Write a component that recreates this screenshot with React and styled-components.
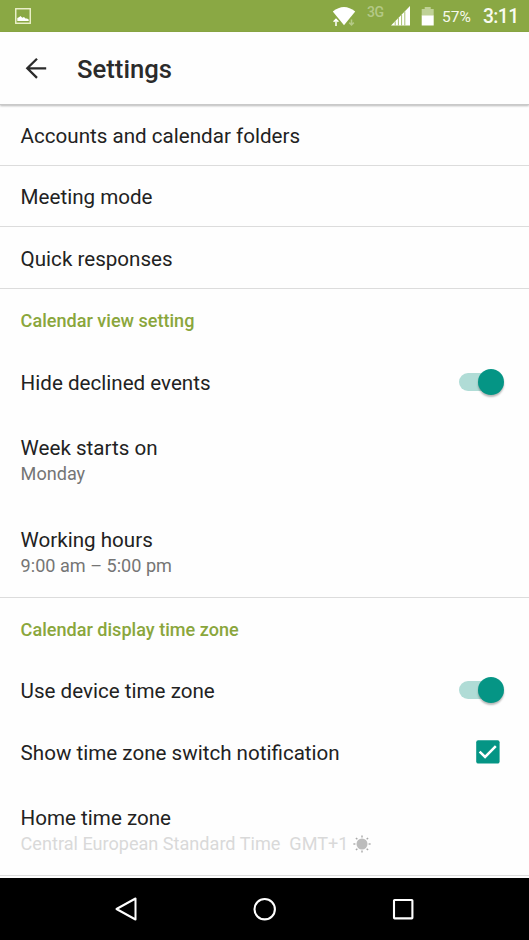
import React from "react";
import styled, { createGlobalStyle } from "styled-components";

const GlobalStyle = createGlobalStyle`
  *, *::before, *::after { box-sizing: border-box; }
  body { margin: 0; background: #fff; font-family: Roboto, "Noto Sans", sans-serif; }
  svg { display: block; flex: none; }
`;

const Screen = styled.div`
  display: flex;
  flex-direction: column;
  width: 529px;
  height: 940px;
  overflow: hidden;
  background: #fefefe;
  color: #222;
`;

const StatusBar = styled.div`
  display: flex;
  align-items: center;
  flex: none;
  height: 32px;
  padding: 0 11px 0 15px;
  background: #8aa844;
  color: #fff;
`;

const StatusIcons = styled.div`
  display: flex;
  align-items: center;
  margin-left: auto;
`;

const Network = styled.span`
  width: 17px;
  margin: 0 7px 9px 11px;
  font-size: 14px;
  font-weight: 500;
  line-height: 14px;
  letter-spacing: -0.4px;
  color: #b4c986;
`;

const Percent = styled.span`
  width: 41px;
  margin-left: 8px;
  padding-top: 2px;
  font-size: 15.5px;
  white-space: nowrap;
  color: #f6f9ec;
`;

const Clock = styled.span`
  width: 35px;
  padding-top: 1px;
  font-size: 19.3px;
  font-weight: 500;
  letter-spacing: -0.6px;
  white-space: nowrap;
  color: #f8fbf0;
`;

const AppBar = styled.header`
  display: flex;
  align-items: center;
  flex: none;
  height: 73px;
  padding: 0 25px;
  background: #fefefe;
  border-bottom: 1px solid #c9c9c9;
  box-shadow: 0 1px 2px rgba(0, 0, 0, 0.28);
`;

const Title = styled.h1`
  margin: 1px 0 0 29px;
  font-size: 25.7px;
  font-weight: 500;
  line-height: 32px;
  color: #2b2b2b;
`;

const List = styled.main`
  flex: 1;
  min-height: 0;
`;

const Row = styled.div`
  display: flex;
  align-items: center;
  justify-content: space-between;
  height: ${(p) => p.$height}px;
  padding: ${(p) => p.$top || 0}px ${(p) => p.$end || 21}px 0 20.6px;
  border-bottom: ${(p) => (p.$divided ? "1px solid #dcdcdc" : "none")};
`;

const SectionTitle = styled.h2`
  margin: 0;
  padding: 0 20.6px;
  font-size: 18.08px;
  font-weight: 500;
  line-height: ${(p) => p.$height}px;
  color: #8aa63c;
`;

const Label = styled.div`
  font-size: 20.6px;
  line-height: 26px;
  white-space: nowrap;
`;

const Detail = styled.div`
  display: flex;
  align-items: center;
  gap: 5px;
  font-size: 18.1px;
  line-height: 26px;
  white-space: pre;
  color: ${(p) => (p.$disabled ? "#d9d9d9" : "#757575")};
`;

const Track = styled.div`
  display: flex;
  justify-content: flex-end;
  align-items: center;
  width: 45px;
  height: 18px;
  margin-bottom: 2px;
  border-radius: 9px;
  background: linear-gradient(to right, #b0dcd6 38px, transparent 38px);
`;

const Thumb = styled.div`
  width: 26px;
  height: 26px;
  flex: none;
  border-radius: 50%;
  background: #059585;
  box-shadow: 0 2px 2px rgba(0, 0, 0, 0.28);
`;

const NavBar = styled.nav`
  display: flex;
  align-items: center;
  justify-content: space-between;
  flex: none;
  height: 62px;
  padding: 0 114px;
  background: #000;
`;

const Toggle = () => (
  <Track role="switch" aria-checked="true">
    <Thumb />
  </Track>
);

const PictureIcon = () => (
  <svg width="16" height="16" viewBox="0 0 16 16">
    <rect x="0.75" y="0.75" width="14.5" height="14.5" fill="none" stroke="#eef3cf" strokeWidth="1.4" />
    <path d="M2.3 13V10L4 9.2L5.5 8L7.3 9.8L9 9L10.5 10.5H12L13.7 11.5V13Z" fill="#fff" />
  </svg>
);

const WifiIcon = () => (
  <svg width="24" height="20" viewBox="0 0 24 20">
    <path d="M0.8 5.6Q12-3.6 23.2 5.6L12 19.2Z" fill="#fff" />
    <path d="M4 20V13.2M1.4 15.6L4 13L6.6 15.6" fill="none" stroke="#8aa844" strokeWidth="3" />
    <path d="M4 20V13.6M1.6 15.8L4 13.4L6.4 15.8" fill="none" stroke="#fff" strokeWidth="1.5" />
    <path d="M19.5 13.5V19M17.2 16.6L19.5 18.9L21.8 16.6" fill="none" stroke="#b4c986" strokeWidth="1.5" />
  </svg>
);

const SignalIcon = () => (
  <svg width="20" height="20" viewBox="0 0 20 20">
    <path d="M0 19.5L19 0V19.5Z" fill="#fff" />
    <path d="M4.2 19.5V15.3M7.4 19.5V12M10.6 19.5V8.7M13.8 19.5V5.4" stroke="#a8c06f" strokeWidth="1" />
  </svg>
);

const BatteryIcon = () => (
  <svg width="13" height="19" viewBox="0 0 13 19">
    <path d="M0.7 9V2H3.7V0H9.7V2H12.7V9Z" fill="#bfd196" />
    <path d="M0.7 8.5H12.7V18.5H0.7Z" fill="#fff" />
  </svg>
);

const BackArrow = () => (
  <svg width="23" height="22" viewBox="0 0 23 22" fill="none" stroke="#2b2b2b" strokeWidth="2.3">
    <path d="M12 1.7L2.3 11.3L12 20.9M2.3 11.3H21.2" />
  </svg>
);

const CheckedBox = () => (
  <svg width="24" height="26" viewBox="0 0 24 26">
    <rect x="0.2" y="0.2" width="23.4" height="23.4" rx="2" fill="#059585" />
    <path d="M3.6 11.6L9.1 17L19.8 6.2" fill="none" stroke="#fff" strokeWidth="2.5" />
  </svg>
);

const rays = [0, 45, 90, 135, 180, 225, 270, 315];

const SunIcon = () => (
  <svg width="18" height="18" viewBox="0 0 18 18">
    <circle cx="9" cy="9" r="5.5" fill="#bcbcbc" />
    {rays.map((angle) => (
      <path key={angle} d="M9 0.4V2.4" stroke="#a8a8a8" strokeWidth="1.4" transform={`rotate(${angle} 9 9)`} />
    ))}
  </svg>
);

const NavBack = () => (
  <svg width="24" height="26" viewBox="0 0 24 26">
    <path d="M2.5 13L21.5 2.5V23.5Z" fill="none" stroke="#fff" strokeWidth="2" strokeLinejoin="round" />
  </svg>
);

const NavHome = () => (
  <svg width="24" height="24" viewBox="0 0 24 24">
    <circle cx="11.7" cy="12.2" r="10.2" fill="none" stroke="#fff" strokeWidth="2.1" />
  </svg>
);

const NavRecent = () => (
  <svg width="24" height="24" viewBox="0 0 24 24">
    <rect x="3" y="3" width="18.4" height="18.4" rx="0.6" fill="none" stroke="#fff" strokeWidth="2.1" />
  </svg>
);

const Gap = styled.div`
  width: 10px;
`;

export default function App() {
  return (
    <Screen>
      <GlobalStyle />
      <StatusBar>
        <PictureIcon />
        <StatusIcons>
          <WifiIcon />
          <Network>3G</Network>
          <SignalIcon />
          <Gap />
          <BatteryIcon />
          <Percent>57%</Percent>
          <Clock>3:11</Clock>
        </StatusIcons>
      </StatusBar>
      <AppBar>
        <BackArrow />
        <Title>Settings</Title>
      </AppBar>
      <List>
        <Row $height={61} $top={1} $divided><Label>Accounts and calendar folders</Label></Row>
        <Row $height={61} $top={2} $divided><Label>Meeting mode</Label></Row>
        <Row $height={62} $top={2} $divided><Label>Quick responses</Label></Row>
        <SectionTitle $height={64}>Calendar view setting</SectionTitle>
        <Row $height={60} $end={25}>
          <Label>Hide declined events</Label>
          <Toggle />
        </Row>
        <Row $height={93} $top={3}>
          <div>
            <Label>Week starts on</Label>
            <Detail>Monday</Detail>
          </div>
        </Row>
        <Row $height={92} $top={2} $divided>
          <div>
            <Label>Working hours</Label>
            <Detail>9:00 am – 5:00 pm</Detail>
          </div>
        </Row>
        <SectionTitle $height={63}>Calendar display time zone</SectionTitle>
        <Row $height={60} $end={25}>
          <Label>Use device time zone</Label>
          <Toggle />
        </Row>
        <Row $height={63} $end={29}>
          <Label>Show time zone switch notification</Label>
          <CheckedBox />
        </Row>
        <Row $height={92} $top={2} $divided>
          <div>
            <Label>Home time zone</Label>
            <Detail $disabled>{"Central European Standard Time  GMT+1"}<SunIcon /></Detail>
          </div>
        </Row>
      </List>
      <NavBar>
        <NavBack />
        <NavHome />
        <NavRecent />
      </NavBar>
    </Screen>
  );
}
